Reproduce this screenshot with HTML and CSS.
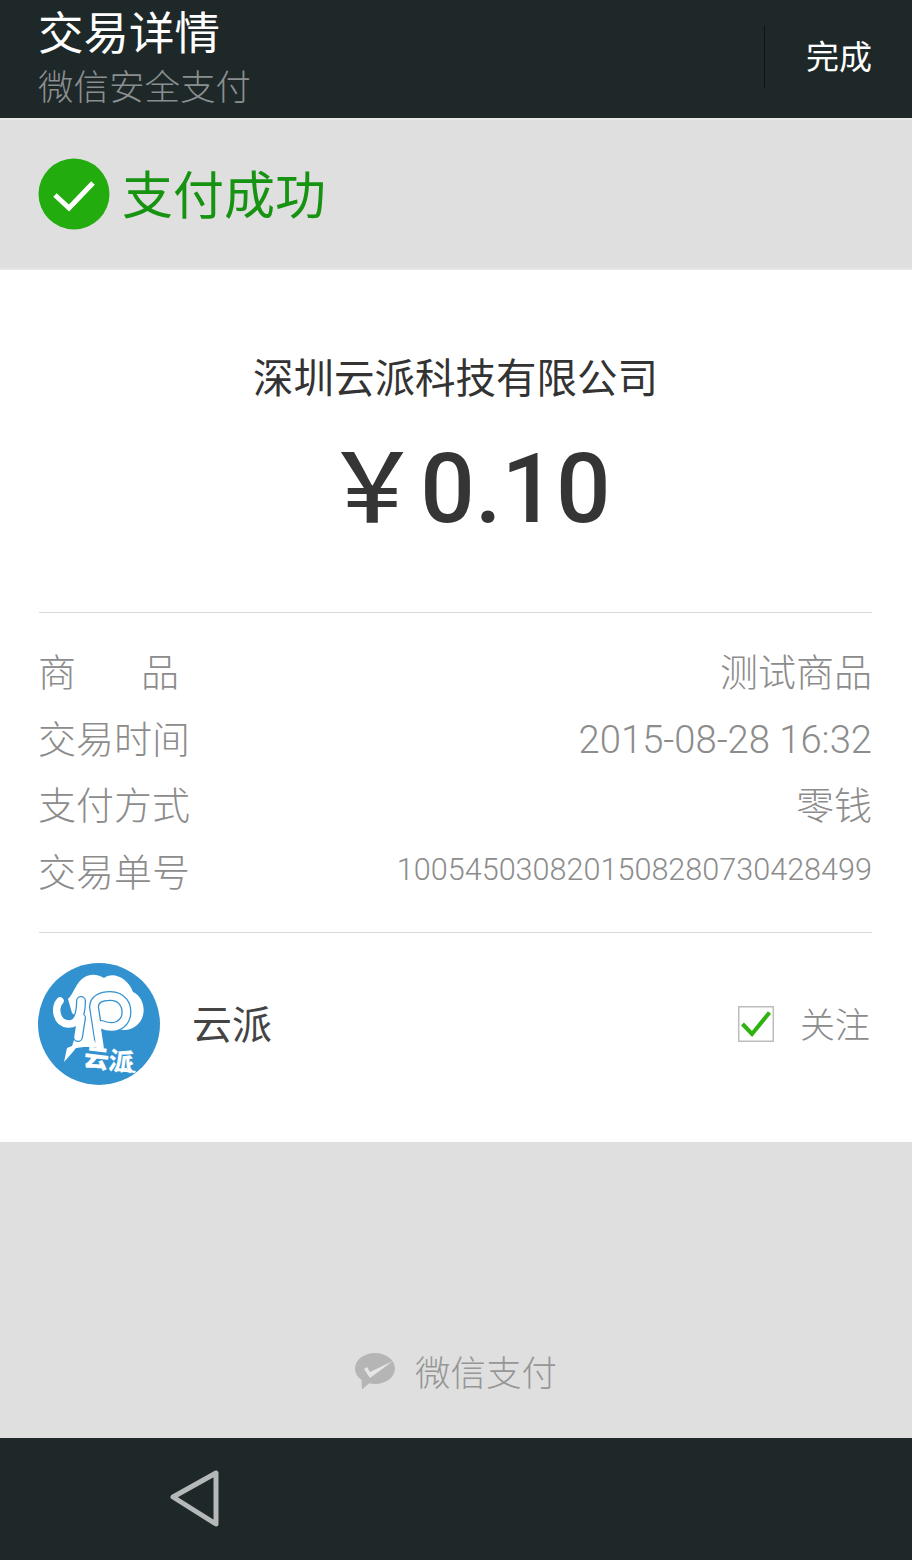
FILE: index.html
```html
<!DOCTYPE html>
<html lang="zh-CN">
<head>
<meta charset="utf-8">
<title>交易详情</title>
<link rel="stylesheet" href="styles.css">
</head>
<body>
<div class="page">
  <header class="topbar">
    <div class="titles">
      <div class="title">交易详情</div>
      <div class="subtitle">微信安全支付</div>
    </div>
    <div class="done-wrap">
      <span class="divider"></span>
      <span class="done">完成</span>
    </div>
  </header>
  <section class="status">
    <svg class="status-icon" viewBox="0 0 72 72" width="72" height="72">
      <circle cx="36" cy="36" r="35.5" fill="#22ac0e"/>
      <path d="M17 37 L31 50 L55 25" fill="none" stroke="#fff" stroke-width="5"/>
    </svg>
    <span class="status-text">支付成功</span>
  </section>
  <main class="card">
    <div class="summary">
      <div class="merchant">深圳云派科技有限公司</div>
      <div class="amount"><span class="yen">￥</span><span>0.10</span></div>
    </div>
    <div class="details">
      <div class="row"><span class="label spaced"><span>商</span><span>品</span></span><span class="value">测试商品</span></div>
      <div class="row"><span class="label">交易时间</span><span class="value num date">2015-08-28 16:32</span></div>
      <div class="row"><span class="label">支付方式</span><span class="value">零钱</span></div>
      <div class="row"><span class="label">交易单号</span><span class="value num small">1005450308201508280730428499</span></div>
    </div>
    <div class="account">
      <svg class="logo" viewBox="0 0 122 122" width="122" height="122">
        <circle cx="61" cy="61" r="61" fill="#3292d0"/>
        <path d="M30 36 C36 30 37 22 44 16 C51 10 60 11 66 15 C75 8 90 15 95 29 C107 34 110 54 98 63 C90 69 82 67 74 64 L50 64 L34 50 Z" fill="#fff"/>
        <path d="M26 99 L29 85 L34 83 L36 77 L43 71 L43 58 L62 58 L64 84 L46 84 L38 85 L34 90 Z" fill="#fff"/>
        <path d="M22 38 C16 44 18 60 30 61 C40 62 43 50 43 38 M43 55 L40 74" fill="none" stroke="#3292d0" stroke-width="10" stroke-linecap="round"/>
        <path d="M22 38 C16 44 18 60 30 61 C40 62 43 50 43 38 M43 55 L40 74" fill="none" stroke="#fff" stroke-width="7.500" stroke-linecap="round"/>
        <path d="M61 76 L56 44 C56 36 64 33 72 33 C84 33 90 42 88 53 C86 62 76 67 64 62" fill="none" stroke="#3292d0" stroke-width="10" stroke-linecap="round"/>
        <path d="M62 84 L56 44 C56 36 64 33 72 33 C84 33 90 42 88 53 C86 62 76 67 64 62" fill="none" stroke="#fff" stroke-width="7.500" stroke-linecap="round"/>
        <path d="M80 105 L98 108 L97 110 L78 108 Z" fill="#fff"/>
        <text class="logo-text" x="46" y="106" transform="rotate(7 70 96)">云派</text>
      </svg>
      <span class="account-name">云派</span>
      <label class="follow">
        <svg class="checkbox" viewBox="0 0 36 36" width="36" height="36">
          <rect x="0.75" y="0.75" width="34.5" height="34.5" fill="#fff" stroke="#bdbdbd" stroke-width="1.5"/>
          <path d="M4.500 18 L14 28 L31.500 6.500" fill="none" stroke="#2fb30f" stroke-width="4"/>
        </svg>
        <span class="follow-text">关注</span>
      </label>
    </div>
  </main>
  <footer class="brand">
    <svg class="brand-icon" viewBox="0 0 40 37" width="40" height="37">
      <path d="M20 0 C31 0 40 7 40 15.500 C40 24 31 31 20 31 C18 31 16 30.700 14 30.200 L7 36.500 L6.500 26.800 C2.500 24 0 20 0 15.500 C0 7 9 0 20 0 Z" fill="#b5b5b5"/>
      <path d="M9 16 L12 14 L15 19 L38 8 L15 25 Z" fill="#e6e6e6"/>
    </svg>
    <span class="brand-text">微信支付</span>
  </footer>
  <nav class="navbar">
    <svg class="back" viewBox="0 0 50 58" width="50" height="58">
      <path d="M46 3 L46 54 L3 27 Z" fill="none" stroke="#b4b8b9" stroke-width="5" stroke-linejoin="round"/>
    </svg>
  </nav>
</div>
</body>
</html>
```

FILE: styles.css
```css
* { box-sizing: border-box; }
html, body { margin: 0; padding: 0; }
body {
  width: 912px;
  height: 1560px;
  overflow: hidden;
  font-family: "Noto Sans CJK SC", "Noto Sans", sans-serif;
  font-weight: 300;
}
.page { display: flex; flex-direction: column; height: 1560px; background: #dfdfdf; }

.topbar {
  height: 118px;
  background: #1e2829;
  display: flex;
  justify-content: space-between;
  padding: 0 40px 0 38px;
}
.titles { display: flex; flex-direction: column; }
.title { font-size: 45.5px; line-height: 54px; margin-top: 3px; color: #fff; font-weight: 400; }
.subtitle { font-size: 35.5px; line-height: 44px; margin-top: 6px; color: #8b8f90; }
.done-wrap { display: flex; align-items: center; }
.divider { width: 1px; height: 62px; margin-top: -4px; background: #0f1516; }
.done { font-size: 33px; line-height: 40px; color: #fff; margin-left: 41px; margin-top: -9px; font-weight: 400; }

.status {
  height: 152px;
  display: flex;
  align-items: center;
  padding: 0 0 0 38px;
  border-top: 2px solid #e8e8e8;
  border-bottom: 2px solid #e6e6e6;
}
.status-icon { flex: none; }
.status-text { font-size: 51px; line-height: 60px; margin-left: 12px; color: #179312; margin-top: -4px; font-weight: 400; }

.card {
  height: 872px;
  background: #fff;
  padding: 0 40px 0 39px;
  display: flex;
  flex-direction: column;
}
.summary { height: 343px; border-bottom: 1px solid #d9d9d9; text-align: center; padding-top: 82px; }
.merchant { font-size: 40.5px; line-height: 48px; color: #333; font-weight: 400; }
.amount {
  display: flex;
  justify-content: center;
  align-items: center;
  margin-top: 43px;
  height: 92px;
  color: #353535;
  font-family: Roboto, sans-serif;
  font-size: 96px;
  font-weight: 500;
}
.yen { font-family: "Noto Sans CJK SC", sans-serif; font-weight: 500; line-height: 92px; margin-left: 24px; margin-top: -16px; }

.details { height: 320px; border-bottom: 1px solid #d9d9d9; padding-top: 24px; }
.row { height: 66.5px; display: flex; justify-content: space-between; align-items: center; color: #8c8c8c; }
.label { font-size: 38px; line-height: 46px; white-space: nowrap; margin-left: -1px; }
.spaced { display: flex; justify-content: space-between; width: 141px; }
.value { font-size: 38px; line-height: 46px; white-space: nowrap; }
.num { font-family: Roboto, sans-serif; font-weight: 300; }
.date { font-size: 38.2px; margin-top: 6px; }
.small { font-size: 30.6px; }

.account { display: flex; align-items: center; height: 208px; padding-bottom: 27px; }
.logo { flex: none; margin-left: -1px; }
.logo-text { font-size: 25px; font-weight: 900; fill: #fff; }
.account-name { font-size: 40px; line-height: 48px; margin-left: 32px; margin-top: -4px; color: #444; font-weight: 400; }
.follow { display: flex; align-items: center; margin-left: auto; }
.checkbox { flex: none; }
.follow-text { font-size: 35px; line-height: 46px; margin-left: 26px; color: #8c8c8c; margin-right: 2px; margin-top: -2px; }

.brand {
  height: 296px;
  display: flex;
  align-items: center;
  justify-content: center;
  padding-top: 162px;
}
.brand-icon { flex: none; }
.brand-text { font-size: 35.5px; line-height: 42px; margin-left: 20px; color: #969696; }

.navbar { height: 122px; background: #1e2829; display: flex; align-items: center; padding-left: 170px; }
.back { display: block; }
```
